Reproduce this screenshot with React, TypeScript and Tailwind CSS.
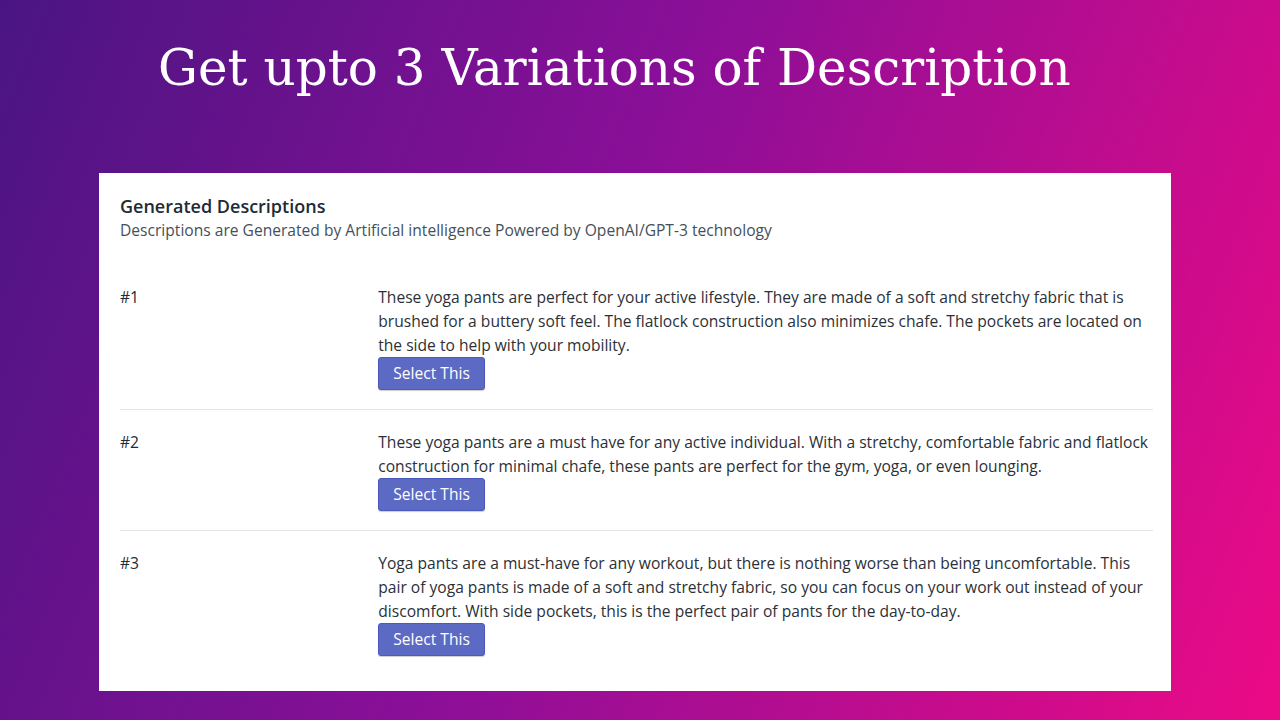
const rows = [
  {
    label: "#1",
    text: "These yoga pants are perfect for your active lifestyle. They are made of a soft and stretchy fabric that is brushed for a buttery soft feel. The flatlock construction also minimizes chafe. The pockets are located on the side to help with your mobility.",
  },
  {
    label: "#2",
    text: "These yoga pants are a must have for any active individual. With a stretchy, comfortable fabric and flatlock construction for minimal chafe, these pants are perfect for the gym, yoga, or even lounging.",
  },
  {
    label: "#3",
    text: "Yoga pants are a must-have for any workout, but there is nothing worse than being uncomfortable. This pair of yoga pants is made of a soft and stretchy fabric, so you can focus on your work out instead of your discomfort. With side pockets, this is the perfect pair of pants for the day-to-day.",
  },
];

function DescriptionRow({ label, text, last }: { label: string; text: string; last: boolean }) {
  return (
    <div className={`flex pt-5 pb-[19px] ${last ? "" : "border-b border-[#e4e5e7]"}`}>
      <div className="w-1/4 shrink-0 leading-6 text-[#212b36]">{label}</div>
      <div className="w-3/4">
        <p className="leading-6 text-[#2b3037]">{text}</p>
        <button className="h-[33px] rounded-[3px] border border-[#4959bd] bg-[#5c6ac4] px-[14px] text-white shadow-[0_1px_1px_rgba(0,0,0,0.2)]">
          Select This
        </button>
      </div>
    </div>
  );
}

export default function App() {
  return (
    <div className="h-[720px] w-[1280px] overflow-hidden bg-[linear-gradient(112deg,#4a1582_0%,#8a0f98_45%,#ec0a86_100%)]">
      <h1 className="pl-[158px] pt-[28px] text-[50px] leading-[80px] text-white [font-family:'DejaVu_Serif',serif]">
        Get upto 3 Variations of Description
      </h1>
      <div className="ml-[99px] mt-[65px] h-[518px] w-[1072px] bg-white pl-[21px] pr-[18px] pt-[21px] text-[15.6px] [font-family:'Open_Sans',sans-serif]">
        <div className="text-[18px] font-semibold leading-6 text-[#212b36]">Generated Descriptions</div>
        <div className="leading-6 text-[#454f5b]">
          Descriptions are Generated by Artificial intelligence Powered by OpenAI/GPT-3 technology
        </div>
        <div className="mt-[23px]">
          {rows.map((r, i) => (
            <DescriptionRow key={r.label} label={r.label} text={r.text} last={i === rows.length - 1} />
          ))}
        </div>
      </div>
    </div>
  );
}
